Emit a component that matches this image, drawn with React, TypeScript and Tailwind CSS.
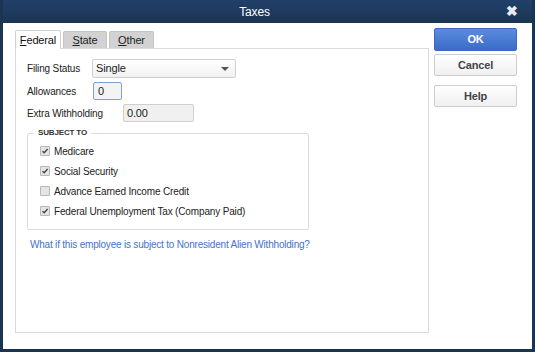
import React from "react";

export default function App() {
  return (
    <div className="flex h-[352px] w-[535px] flex-col bg-[#1b3452] px-[3px] pb-[3px] font-['Liberation_Sans',Arial,sans-serif] text-[10px] tracking-[-0.15px] text-[#222]">
      <TitleBar />
      <div className="flex flex-1 bg-white">
        <div className="ml-[12px] mt-[6px] flex w-[414px] flex-col">
          <Tabs />
          <div className="flex flex-1 flex-col border border-[#dadada] mb-[16px] pl-[11px] pt-[10px]">
            <div className="flex h-[19px] items-center">
              <span className="w-[65px]">Filing Status</span>
              <div className="flex h-[19px] w-[144px] items-center justify-between rounded-[2px] border border-[#cfcfcf] bg-gradient-to-b from-white to-[#f1f1f1] pl-[3px] pr-[6px] text-[11px]">
                <span>Single</span>
                <span className="h-0 w-0 border-x-[4px] border-t-[4px] border-x-transparent border-t-[#555]" />
              </div>
            </div>
            <div className="mt-[4px] flex h-[18px] items-center">
              <span className="w-[66px]">Allowances</span>
              <div className="flex h-[18px] w-[29px] items-center rounded-[2px] border border-[#7f9fd4] bg-[#f3f3f3] pl-[4px] text-[11px]">0</div>
            </div>
            <div className="mt-[4px] flex h-[18px] items-center">
              <span className="w-[96px]">Extra Withholding</span>
              <div className="flex h-[18px] w-[71px] items-center rounded-[2px] border border-[#cfcfcf] bg-[#f0f0f0] pl-[3px] text-[11px]">0.00</div>
            </div>
            <fieldset className="mt-[5px] h-[103px] w-[282px] rounded-[2px] border border-[#dcdcdc] px-[12px] pt-[2px]">
              <legend className="ml-[-6px] px-[4px] text-[8px] font-bold text-[#333]">SUBJECT TO</legend>
              <Check label="Medicare" checked />
              <Check label="Social Security" checked />
              <Check label="Advance Earned Income Credit" />
              <Check label="Federal Unemployment Tax (Company Paid)" checked />
            </fieldset>
            <div className="ml-[3px] mt-[7px] tracking-[-0.2px] text-[#4573cf]">What if this employee is subject to Nonresident Alien Withholding?</div>
          </div>
        </div>
        <div className="ml-[5px] mt-[5px] flex w-[83px] flex-col">
          <button className="h-[23px] rounded-[2px] border border-[#3c68bd] bg-gradient-to-b from-[#5c8ce0] to-[#3a6cc8] text-[11px] font-bold text-white">OK</button>
          <Btn label="Cancel" className="mt-[3px]" />
          <Btn label="Help" className="mt-[9px]" />
        </div>
      </div>
    </div>
  );
}

function TitleBar() {
  return (
    <div className="relative flex h-[23px] items-center justify-center bg-gradient-to-b from-[#21406a] to-[#1b3452] pr-[26px] text-[12px] text-white">
      <span>Taxes</span>
      <span className="absolute right-[14px] top-[3px] text-[14px] font-bold leading-[16px] text-[#e8ecf2]">✖</span>
    </div>
  );
}

function Tabs() {
  return (
    <div className="flex h-[19px] items-end gap-[2px]">
      <div className="relative -mb-px flex h-[19px] w-[46px] items-center justify-center rounded-t-[2px] border border-b-0 border-[#d0d0d0] bg-white text-[11px] text-[#111]">
        <span><u>F</u>ederal</span>
      </div>
      <div className="flex h-[17px] w-[44px] items-center justify-center rounded-t-[2px] border border-b-0 border-[#c4c4c4] bg-[#d2d2d2] text-[11px]">
        <span><u>S</u>tate</span>
      </div>
      <div className="flex h-[17px] w-[45px] items-center justify-center rounded-t-[2px] border border-b-0 border-[#c4c4c4] bg-[#d2d2d2] text-[11px]">
        <span><u>O</u>ther</span>
      </div>
    </div>
  );
}

function Check({ label, checked }: { label: string; checked?: boolean }) {
  return (
    <div className="flex h-[20px] items-center">
      <span className="flex h-[10px] w-[10px] items-center justify-center rounded-[1px] border border-[#b8b8b8] bg-[#e4e4e4]">
        {checked && (
          <svg width="8" height="8" viewBox="0 0 8 8">
            <path d="M1.5 4.2 L3.2 5.8 L6.6 2" fill="none" stroke="#444" strokeWidth="1.3" />
          </svg>
        )}
      </span>
      <span className="ml-[4px]">{label}</span>
    </div>
  );
}

function Btn({ label, className }: { label: string; className?: string }) {
  return (
    <button className={`h-[22px] rounded-[2px] border border-[#cdcdcd] bg-gradient-to-b from-white to-[#f0f0f0] text-[11px] font-bold text-[#444] ${className ?? ""}`}>
      {label}
    </button>
  );
}
